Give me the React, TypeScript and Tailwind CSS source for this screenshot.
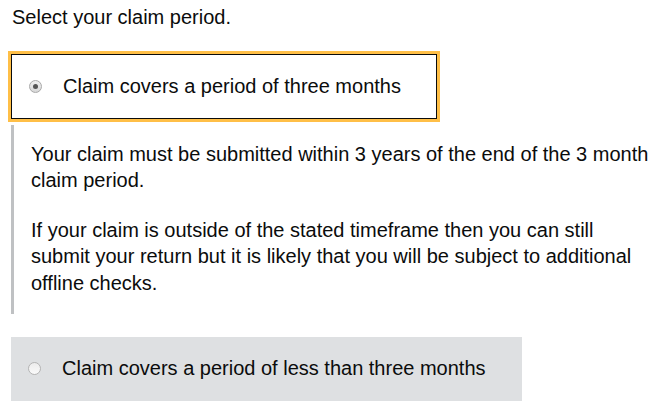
import React from "react";

function Radio({ checked }: { checked?: boolean }) {
  return (
    <span
      className={
        "flex h-[13px] w-[13px] shrink-0 items-center justify-center rounded-full border " +
        (checked
          ? "border-[#a9a9a9] bg-[linear-gradient(#f0f0f0,#d8d8d8)]"
          : "border-[#b4b4b4] bg-[linear-gradient(#ececec,#fafafa)]")
      }
    >
      {checked && <span className="h-[5px] w-[5px] rounded-full bg-[#555555]" />}
    </span>
  );
}

export default function App() {
  return (
    <div
      className="min-h-[408px] w-[669px] bg-white text-[#0b0c0c] text-[20px] leading-[26.5px]"
      style={{ fontFamily: '"Liberation Sans", Arial, sans-serif' }}
    >
      <p className="pl-[12px] pt-[4px]">Select your claim period.</p>

      <div className="ml-[11px] mt-[23px] flex h-[65px] w-[426px] items-center border border-[#0b0c0c] pl-[17px] outline-[3px] outline-solid outline-[#ffbf47]">
        <Radio checked />
        <span className="ml-[21px]">Claim covers a period of three months</span>
      </div>

      <div className="ml-[11px] mt-[6px] h-[189px] border-l-[3px] border-[#bfc1c3] pl-[17px] pt-[16px]">
        <p className="w-[638px]">
          Your claim must be submitted within 3 years of the end of the 3 month claim period.
        </p>
        <p className="mt-[23px] w-[638px]">
          If your claim is outside of the stated timeframe then you can still
          <br />
          submit your return but it is likely that you will be subject to additional offline
          checks.
        </p>
      </div>

      <div className="ml-[11px] mt-[23px] flex h-[64px] w-[511px] items-center bg-[#dee0e2] pl-[17px]">
        <Radio />
        <span className="ml-[21px]">Claim covers a period of less than three months</span>
      </div>
    </div>
  );
}
